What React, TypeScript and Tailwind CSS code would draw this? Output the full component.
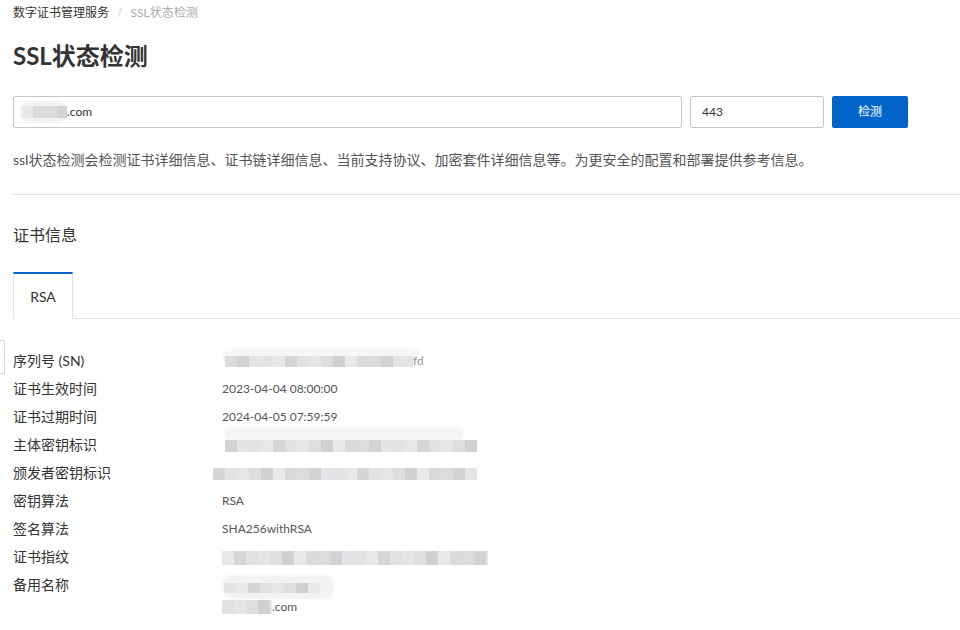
import React from 'react'

const font = { fontFamily: 'Lato, "Noto Sans CJK SC", sans-serif' }

const greys = ['#e6e6e6', '#dcdcdc', '#d6d6d6', '#e9e9ea', '#e3e3e3', '#dedede', '#d3d3d5', '#e2e2e2', '#d9dadc', '#e8e8e8', '#d0d0d0', '#e4e5e8']

// redacted block, drawn as a row of grey tiles
function Mosaic({ w, h, tile = 12, offset = 0, className = '' }: { w: number; h: number; tile?: number; offset?: number; className?: string }) {
  const n = Math.ceil(w / tile)
  return (
    <span className={'inline-flex overflow-hidden align-middle ' + className} style={{ width: w, height: h }}>
      {Array.from({ length: n }).map((_, i) => (
        <span key={i} className="shrink-0" style={{ width: tile, height: h, background: greys[(i * 5 + offset) % greys.length] }} />
      ))}
    </span>
  )
}

function Row({ label, children }: { label: string; children: React.ReactNode }) {
  return (
    <div className="flex min-h-[28px]">
      <div className="w-[209px] shrink-0 text-[14px] leading-[28px] text-[#333]">{label}</div>
      <div className="text-[12px] leading-[28px] text-[#555]">{children}</div>
    </div>
  )
}

export default function App() {
  return (
    <div className="relative min-h-[630px] w-[960px] overflow-hidden bg-white pl-[13px] pt-[3px]" style={font}>
      {/* breadcrumb */}
      <div className="flex items-center text-[12px] leading-[20px]">
        <span className="text-[#333]">数字证书管理服务</span>
        <span className="mx-[8px] text-[#ccc]">/</span>
        <span className="text-[#aaa]">SSL状态检测</span>
      </div>

      <h1 className="mt-[17px] text-[24px] font-bold leading-[32px] text-[#333]">SSL状态检测</h1>

      <div className="mt-[24px] flex gap-[8px]">
        <div className="relative flex h-[32px] w-[669px] items-center rounded-[2px] border border-[#c4c6cc] pl-[7px] text-[12px] text-[#333]">
          <span className="absolute left-[6px] top-[4px] h-[22px] w-[48px] rounded-full bg-[#f4f4f4] blur-[1px]" />
          <Mosaic w={46} h={12} tile={12} offset={3} className="relative" />
          <span className="relative">.com</span>
        </div>
        <div className="flex h-[32px] w-[134px] items-center rounded-[2px] border border-[#c4c6cc] pl-[11px] text-[12px] text-[#333]">443</div>
        <button className="h-[32px] w-[76px] rounded-[2px] bg-[#0064c8] text-[12px] text-white">检测</button>
      </div>

      <p className="mt-[22px] text-[14px] leading-[20px] text-[#555]">
        ssl状态检测会检测证书详细信息、证书链详细信息、当前支持协议、加密套件详细信息等。为更安全的配置和部署提供参考信息。
      </p>

      <div className="mt-[24px] h-px bg-[#e3e3e3]" />

      <h2 className="mt-[28px] text-[16px] leading-[24px] text-[#333]">证书信息</h2>

      {/* tabs */}
      <div className="mt-[25px] flex">
        <div className="flex h-[47px] w-[60px] items-center justify-center border-x border-t-2 border-x-[#e3e3e3] border-t-[#0064c8] bg-white text-[14px] text-[#333]">
          RSA
        </div>
        <div className="flex-1 border-b border-[#e3e3e3]" />
      </div>

      <div className="absolute left-0 top-[340px] h-[34px] w-[5px] border border-l-0 border-[#d8d8d8] bg-white" />

      <div className="mt-[28px]">
        <Row label="序列号 (SN)">
          <span className="relative inline-block pl-[3px]">
            <span className="absolute left-0 top-[2px] h-[16px] w-[200px] rounded-full bg-[#f6f6f6] blur-[1px]" />
            <Mosaic w={188} h={11} offset={1} className="relative" />
            <span className="relative text-[#999]">fd</span>
          </span>
        </Row>
        <Row label="证书生效时间">2023-04-04 08:00:00</Row>
        <Row label="证书过期时间">2024-04-05 07:59:59</Row>
        <Row label="主体密钥标识">
          <span className="relative inline-block pl-[3px]">
            <span className="absolute left-[2px] top-[-4px] h-[14px] w-[240px] rounded-full bg-[#f5f5f5] blur-[1px]" />
            <Mosaic w={252} h={12} offset={6} className="relative" />
          </span>
        </Row>
        <Row label="颁发者密钥标识">
          <span className="-ml-[9px]">
            <Mosaic w={264} h={12} offset={2} />
          </span>
        </Row>
        <Row label="密钥算法">RSA</Row>
        <Row label="签名算法">SHA256withRSA</Row>
        <Row label="证书指纹">
          <Mosaic w={266} h={14} offset={9} />
        </Row>
        <Row label="备用名称">
          <div className="relative pt-[6px] leading-[20px]">
            <span className="absolute left-0 top-[4px] h-[24px] w-[112px] rounded-[10px] bg-[#f3f3f3] blur-[1px]" />
            <div className="relative h-[20px]">
              <Mosaic w={96} h={10} tile={12} offset={4} className="ml-[2px]" />
            </div>
            <div className="relative flex items-center">
              <Mosaic w={50} h={14} tile={12} offset={7} />
              <span>.com</span>
            </div>
          </div>
        </Row>
      </div>
    </div>
  )
}
